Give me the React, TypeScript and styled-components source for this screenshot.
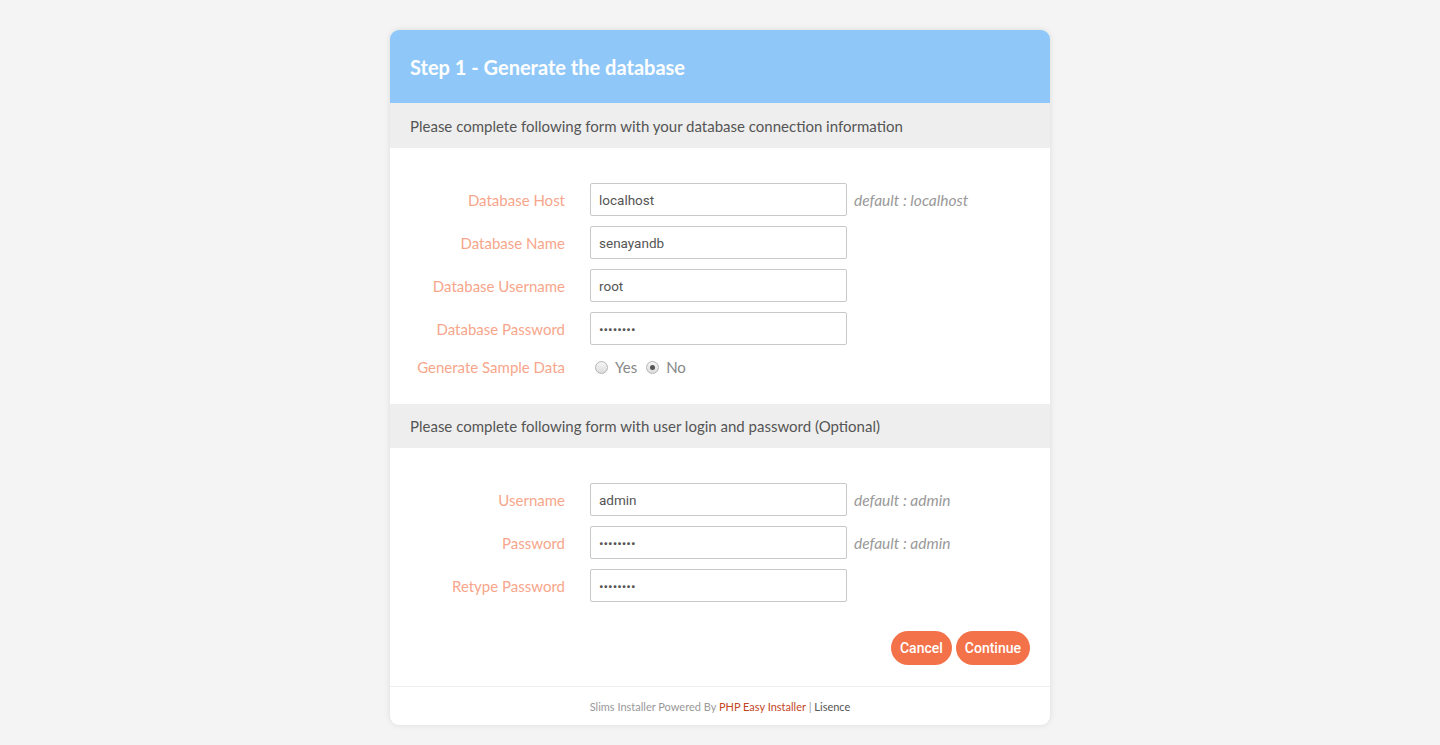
import React from "react"
import styled, { createGlobalStyle } from "styled-components"

const GlobalStyle = createGlobalStyle`
    html, body {
        margin: 0;
        padding: 0;
        background: #f4f4f4;
        font-family: Lato, "Open Sans", sans-serif;
    }
`

const Page = styled.div`
    display: flex;
    justify-content: center;
    padding: 30px 0 20px;
`

const Card = styled.div`
    width: 660px;
    background: white;
    border-radius: 9px;
    overflow: hidden;
    box-shadow: 0 0 6px rgba(0, 0, 0, 0.1);
`

const Header = styled.div`
    height: 73px;
    background: #8fc8f8;
    display: flex;
    align-items: center;
    padding: 0 20px;
    color: white;
    font-size: 20px;
    font-weight: 700;
`

const Band = styled.div<{ $h: number }>`
    height: ${(p) => p.$h}px;
    background: #eeeeee;
    display: flex;
    align-items: center;
    padding: 0 20px;
    color: #555;
    font-size: 15px;
`

const Form = styled.div<{ $bottom: number }>`
    display: flex;
    flex-direction: column;
    gap: 10px;
    padding: 35px 20px ${(p) => p.$bottom}px;
`

const Row = styled.div<{ $h?: number }>`
    display: grid;
    grid-template-columns: 155px 257px auto;
    column-gap: 25px;
    align-items: center;
    height: ${(p) => p.$h ?? 33}px;
`

const Label = styled.label`
    text-align: right;
    color: #f7a68b;
    font-size: 15px;
`

const Input = styled.input`
    box-sizing: border-box;
    width: 257px;
    height: 33px;
    border: 1px solid #c8c8c8;
    border-radius: 2px;
    padding: 0 8px;
    font-family: Roboto, "Liberation Sans", sans-serif;
    font-size: 13.5px;
    color: #555;
    outline: none;
`

const Hint = styled.span`
    margin-left: -18px;
    font-style: italic;
    color: #999;
    font-size: 15.5px;
`

const Radios = styled.div`
    display: flex;
    align-items: center;
    gap: 7px;
    padding-left: 5px;
    color: #888;
    font-size: 15px;
`

const RadioDot = styled.span<{ $checked?: boolean }>`
    width: 11px;
    height: 11px;
    border-radius: 50%;
    border: 1px solid #b5b5b5;
    background: linear-gradient(#f5f5f5, #dcdcdc);
    display: inline-flex;
    align-items: center;
    justify-content: center;
    &::after {
        content: "";
        width: 5px;
        height: 5px;
        border-radius: 50%;
        background: ${(p) => (p.$checked ? "#555" : "transparent")};
    }
`

const RadioItem = styled.span`
    display: inline-flex;
    align-items: center;
    gap: 7px;
    margin-right: 2px;
`

const Actions = styled.div`
    display: flex;
    justify-content: flex-end;
    gap: 4px;
    padding: 29px 20px 21px;
`

const Button = styled.button`
    height: 34px;
    padding: 0 9px;
    border: none;
    border-radius: 17px;
    background: #f47249;
    color: white;
    font-family: Roboto, "Liberation Sans", sans-serif;
    font-size: 14px;
    font-weight: 500;
`

const Footer = styled.div`
    border-top: 1px solid #eeeeee;
    height: 38px;
    display: flex;
    align-items: center;
    justify-content: center;
    font-size: 11px;
    color: #999;
    a {
        text-decoration: none;
        &.brand {
            color: #c4461f;
        }
        &.plain {
            color: #555;
        }
    }
`

type Field = { label: string; value: string; password?: boolean; hint?: string }

const dbFields: Field[] = [
    { label: "Database Host", value: "localhost", hint: "default : localhost" },
    { label: "Database Name", value: "senayandb" },
    { label: "Database Username", value: "root" },
    { label: "Database Password", value: "password", password: true },
]

const userFields: Field[] = [
    { label: "Username", value: "admin", hint: "default : admin" },
    { label: "Password", value: "password", password: true, hint: "default : admin" },
    { label: "Retype Password", value: "password", password: true },
]

const FieldRow = ({ f }: { f: Field }) => (
    <Row>
        <Label>{f.label}</Label>
        <Input type={f.password ? "password" : "text"} defaultValue={f.value} />
        {f.hint ? <Hint>{f.hint}</Hint> : <span />}
    </Row>
)

const App = () => {
    return (
        <>
            <GlobalStyle />
            <Page>
                <Card>
                    <Header>Step 1 - Generate the database</Header>
                    <Band $h={45}>Please complete following form with your database connection information</Band>
                    <Form $bottom={25}>
                        {dbFields.map((f) => (
                            <FieldRow key={f.label} f={f} />
                        ))}
                        <Row $h={24}>
                            <Label>Generate Sample Data</Label>
                            <Radios>
                                <RadioItem><RadioDot /> Yes</RadioItem>
                                <RadioItem><RadioDot $checked /> No</RadioItem>
                            </Radios>
                            <span />
                        </Row>
                    </Form>
                    <Band $h={44}>Please complete following form with user login and password (Optional)</Band>
                    <Form $bottom={0}>
                        {userFields.map((f) => (
                            <FieldRow key={f.label} f={f} />
                        ))}
                    </Form>
                    <Actions>
                        <Button>Cancel</Button>
                        <Button>Continue</Button>
                    </Actions>
                    <Footer>
                        Slims Installer Powered By&nbsp;<a className="brand" href="#">PHP Easy Installer</a>&nbsp;|&nbsp;<a className="plain" href="#">Lisence</a>
                    </Footer>
                </Card>
            </Page>
        </>
    )
}

export default App
